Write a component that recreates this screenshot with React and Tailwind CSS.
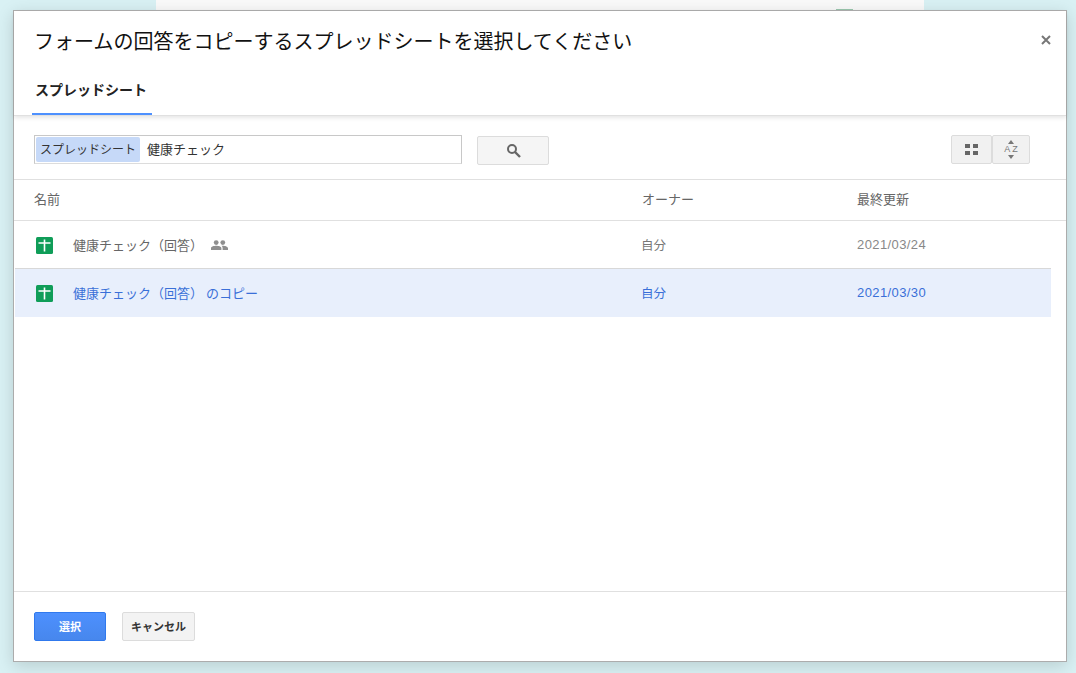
import React from 'react'

const font = { fontFamily: '"Noto Sans CJK JP", "Liberation Sans", sans-serif' }

function SheetIcon() {
  return (
    <svg width="17" height="17" viewBox="0 0 17 17" className="shrink-0">
      <rect width="17" height="17" rx="1.5" fill="#0f9d58" />
      <path d="M2.5 5.2h12v1.5H9.3V14.5H7.7V6.7H2.5zM7.7 2.5h1.6v3H7.7z" fill="#fff" />
    </svg>
  )
}

function PeopleIcon() {
  return (
    <svg width="17" height="10" viewBox="0 0 17 10" className="ml-[8px]">
      <circle cx="5.2" cy="2.6" r="2.4" fill="#8f8f8f" />
      <circle cx="11.8" cy="2.6" r="2.4" fill="#8f8f8f" />
      <path d="M0 10V8.2C0 6.6 3 5.8 5.2 5.8s5.2.8 5.2 2.4V10zM11.6 10V8c0-.9-.4-1.6-1-2.2.5-.1 1-.1 1.4-.1C14 5.7 17 6.6 17 8.2V10z" fill="#8f8f8f" />
    </svg>
  )
}

function Row({ name, shared, date, selected }) {
  const color = selected ? 'text-[#3a6fd8]' : 'text-[#777]'
  return (
    <div className={`flex items-center h-[48px] ml-px mr-[15px] ${selected ? 'bg-[#e8effc]' : 'bg-white pt-px border-b border-[#d8d8d8]'}`}>
      <div className="w-[626px] flex items-center pl-[21px]">
        <SheetIcon />
        <span className={`ml-[20px] text-[13px] ${selected ? color : 'text-[#666]'}`}>{name}</span>
        {shared && <PeopleIcon />}
      </div>
      <div className={`w-[216px] text-[12.5px] ${color}`}>自分</div>
      <div className={`text-[13px] tracking-[0.4px] ${selected ? color : 'text-[#888]'}`} style={{ fontFamily: '"Liberation Sans", sans-serif' }}>{date}</div>
    </div>
  )
}

export default function App() {
  return (
    <div className="relative w-[1076px] h-[673px] overflow-hidden bg-[#d9f1f4]" style={font}>
      {/* page behind the dialog */}
      <div className="absolute left-[156px] top-0 w-[768px] h-[12px] bg-[#fafafa]">
        <div className="absolute left-[680px] top-[9px] w-[17px] h-[3px] bg-[#9cc9b0]" />
      </div>

      <div className="absolute left-[13px] top-[10px] w-[1054px] h-[652px] flex flex-col bg-white border border-[#acacac] shadow-[0_4px_16px_rgba(0,0,0,0.15)]">
        {/* Header */}
        <div className="relative h-[105px] border-b border-[#e0e0e0] shadow-[0_2px_4px_rgba(0,0,0,0.1)]">
          <h1 className="pl-[20px] pt-[15px] text-[20px] leading-[30px] font-normal text-[#111]">
            フォームの回答をコピーするスプレッドシートを選択してください
          </h1>
          <div className="absolute left-[18px] top-[66px] w-[120px] h-[38px] pb-[12px] pr-[2px] flex justify-center items-center border-b-[2px] border-[#4d90fe] text-[14px] font-bold text-[#222]">
            スプレッドシート
          </div>
          <svg width="10" height="10" viewBox="0 0 10 10" className="absolute right-[15px] top-[24px]">
            <path d="M1 1l8 8M9 1l-8 8" stroke="#777" strokeWidth="2" />
          </svg>
        </div>

        {/* Search */}
        <div className="h-[64px] flex items-center pt-[4px] pl-[20px] pr-[36px] border-b border-[#e0e0e0]">
          <div className="w-[428px] h-[29px] flex items-center border border-[#c8c8c8] border-b-[#dcdcdc] pl-[1px]">
            <span className="h-[25px] w-[104px] pb-[2px] rounded-[2px] bg-[#c6d9f8] flex items-center justify-center text-[12px] text-[#333]">スプレッドシート</span>
            <span className="ml-[7px] pb-[2px] text-[13px] text-[#333]">健康チェック</span>
          </div>
          <button className="ml-[15px] mt-[2px] w-[72px] h-[29px] flex items-center justify-center rounded-[2px] border border-[#dcdcdc] bg-[#f5f5f5]">
            <svg width="15" height="15" viewBox="0 0 15 15">
              <circle cx="6" cy="6" r="4" fill="none" stroke="#666" strokeWidth="2" />
              <path d="M9 9l5 5" stroke="#666" strokeWidth="2.4" />
            </svg>
          </button>
          <div className="ml-auto flex">
            <button className="w-[41px] h-[29px] flex items-center justify-center rounded-[2px] border border-[#dcdcdc] bg-[#f1f1f1]">
              <svg width="13" height="11" viewBox="0 0 13 11">
                <path d="M0 0h5v4H0zM8 0h5v4H8zM0 7h5v4H0zM8 7h5v4H8z" fill="#666" />
              </svg>
            </button>
            <button className="w-[38px] h-[29px] flex flex-col items-center justify-center rounded-[2px] border border-[#dcdcdc] bg-[#f1f1f1]">
              <svg width="6" height="4" viewBox="0 0 6 4"><path d="M3 0l3 4H0z" fill="#777" /></svg>
              <span className="text-[9px] leading-[11px] tracking-[2px] pl-[2px] text-[#777]" style={{ fontFamily: '"Liberation Sans", sans-serif' }}>AZ</span>
              <svg width="6" height="4" viewBox="0 0 6 4"><path d="M0 0h6L3 4z" fill="#777" /></svg>
            </button>
          </div>
        </div>

        {/* Table head */}
        <div className="h-[41px] flex items-center pb-[2px] pl-[20px] border-b border-[#e0e0e0] text-[13px] text-[#666]">
          <div className="w-[608px]">名前</div>
          <div className="w-[215px]">オーナー</div>
          <div>最終更新</div>
        </div>

        {/* Rows */}
        <div className="flex-1">
          <Row name="健康チェック（回答）" shared date="2021/03/24" />
          <Row name="健康チェック（回答） のコピー" date="2021/03/30" selected />
        </div>

        {/* Footer */}
        <div className="h-[70px] flex items-center pl-[20px] gap-[16px] border-t border-[#e0e0e0]">
          <button className="w-[72px] h-[29px] rounded-[2px] border border-[#3079ed] bg-gradient-to-b from-[#4d90fe] to-[#4787ed] text-[11px] font-bold text-white">選択</button>
          <button className="w-[73px] h-[29px] rounded-[2px] border border-[#dcdcdc] bg-[#f3f3f3] text-[11px] font-bold text-[#333]">キャンセル</button>
        </div>
      </div>
    </div>
  )
}
